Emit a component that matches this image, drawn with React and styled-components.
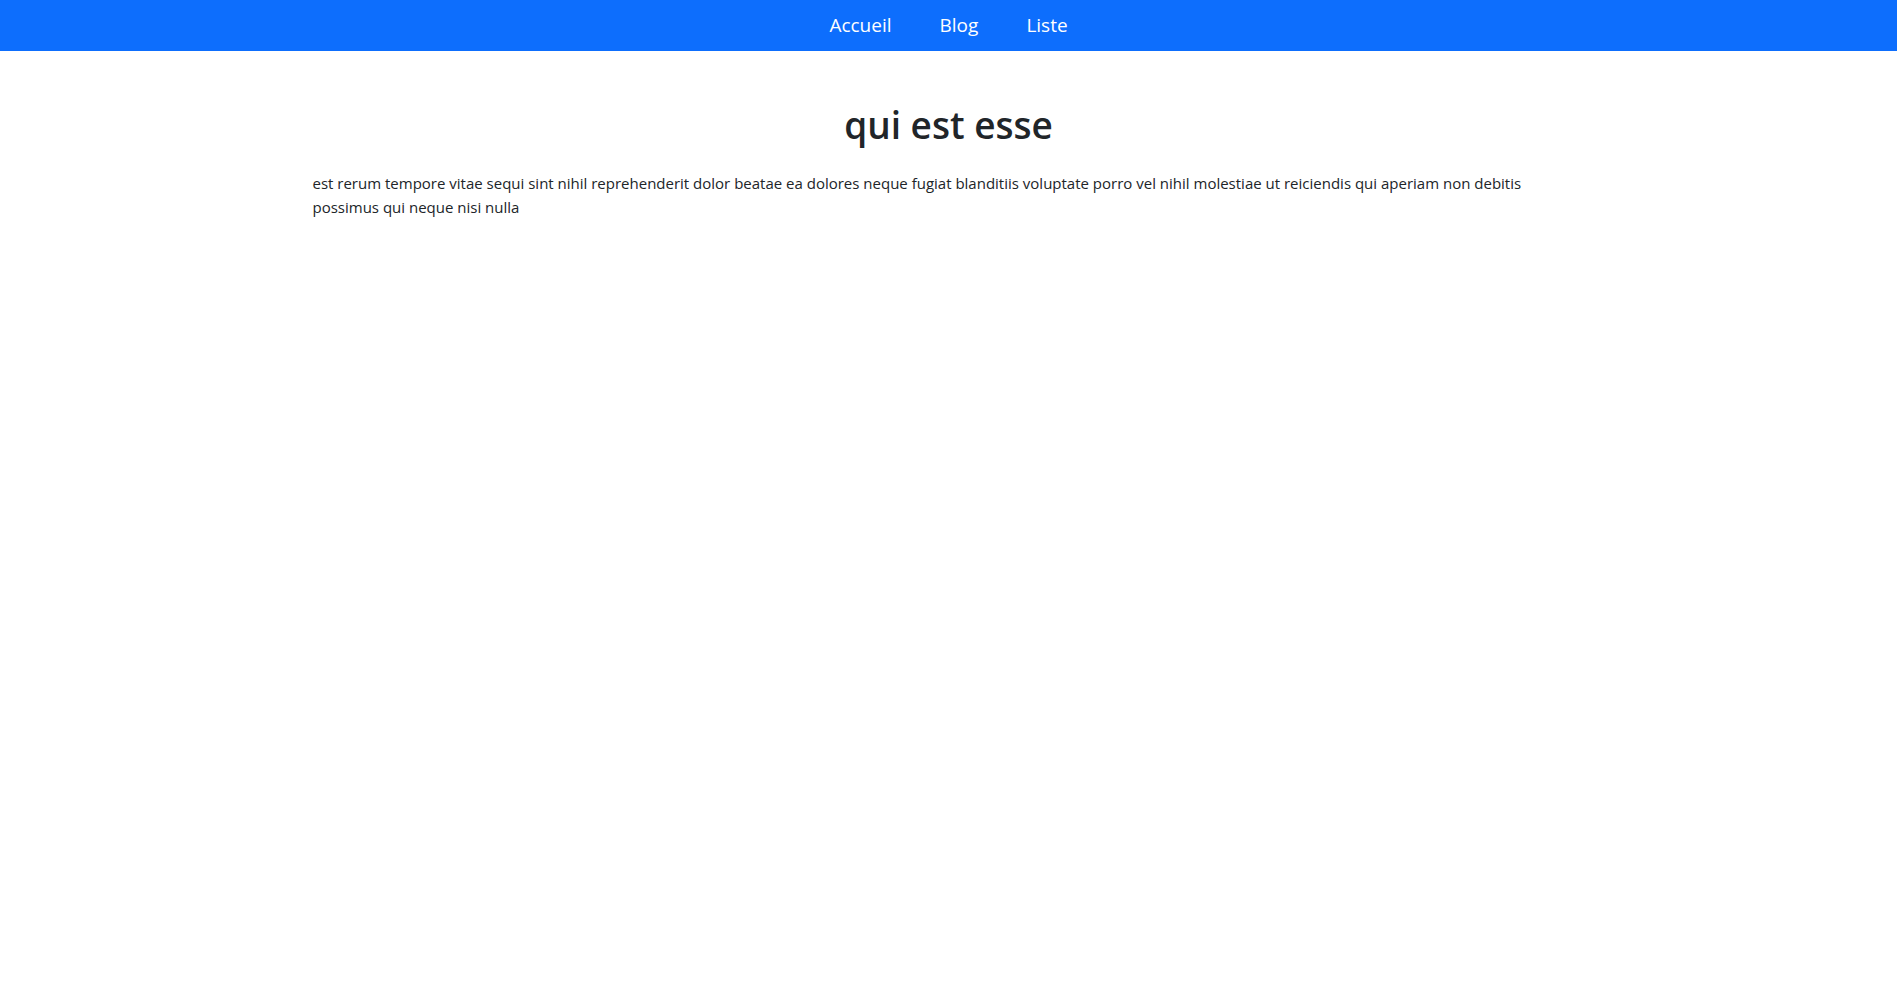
import React from 'react';
import styled, { createGlobalStyle } from 'styled-components';

const GlobalStyle = createGlobalStyle`
  * {
    box-sizing: border-box;
  }
  body {
    margin: 0;
    font-family: "Open Sans", "Noto Sans", sans-serif;
    font-size: 16px;
    line-height: 1.5;
    color: #212529;
    background-color: #fff;
  }
`;

const Navbar = styled.nav`
  height: 51px;
  background-color: #0d6efd;
  display: flex;
  justify-content: center;
  align-items: center;
`;

const NavList = styled.ul`
  list-style: none;
  margin: 0;
  padding: 0;
  display: flex;
  gap: 48px;
  li a {
    color: #fff;
    font-size: 19px;
    text-decoration: none;
  }
`;

const Container = styled.main`
  width: 1296px;
  margin: 0 auto;
  padding: 0 12px;
`;

const Title = styled.h1`
  margin: 52px 0 24px;
  font-size: 37px;
  font-weight: 600;
  line-height: 1.2;
  text-align: center;
`;

const Body = styled.p`
  margin: 0;
  font-size: 15px;
  line-height: 24px;
`;

const links = ['Accueil', 'Blog', 'Liste'];

const App = () => {
  return (
    <>
      <GlobalStyle />
      <Navbar>
        <NavList>
          {links.map((l) => (
            <li key={l}>
              <a href="#">{l}</a>
            </li>
          ))}
        </NavList>
      </Navbar>
      <Container>
        <Title>qui est esse</Title>
        <Body>
          est rerum tempore vitae sequi sint nihil reprehenderit dolor beatae ea dolores neque fugiat blanditiis
          voluptate porro vel nihil molestiae ut reiciendis qui aperiam non debitis possimus qui neque nisi nulla
        </Body>
      </Container>
    </>
  );
};

export default App;
